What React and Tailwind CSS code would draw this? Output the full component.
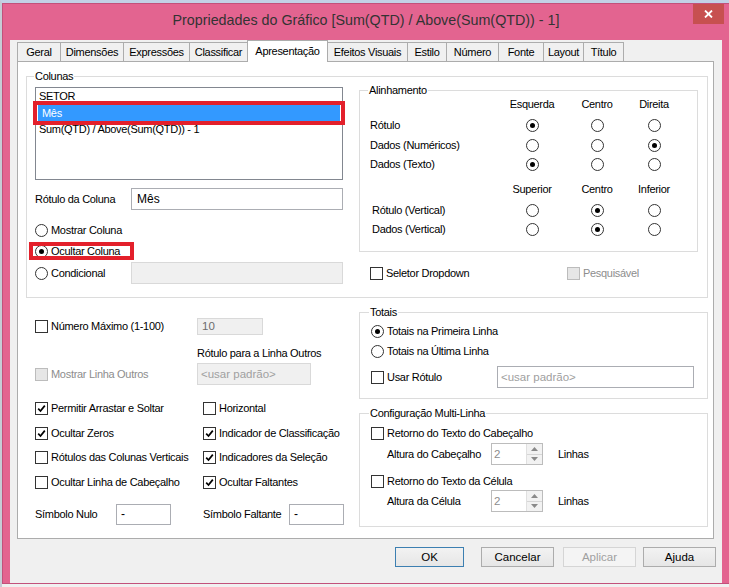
import React from 'react';

const tabs = [
  ['Geral', 'w-[43px]'],
  ['Dimensões', 'w-[63px]'],
  ['Expressões', 'w-[66px]'],
  ['Classificar', 'w-[58px]'],
  ['Apresentação', 'w-[81px]', true],
  ['Efeitos Visuais', 'w-[79px]'],
  ['Estilo', 'w-[39px]'],
  ['Número', 'w-[52px]'],
  ['Fonte', 'w-[45px]'],
  ['Layout', 'w-[40px]'],
  ['Título', 'w-[41px]'],
];

const options = [
  [['Permitir Arrastar e Soltar', true], ['Horizontal', false], 'h-[25px]'],
  [['Ocultar Zeros', true], ['Indicador de Classificação', true], 'h-[24px]'],
  [['Rótulos das Colunas Verticais', false], ['Indicadores da Seleção', true], 'h-[25px]'],
  [['Ocultar Linha de Cabeçalho', false], ['Ocultar Faltantes', true], 'h-[24px]'],
];

const Check = ({ checked, disabled }) => (
  <span className={`w-[13px] h-[13px] border shrink-0 flex items-center justify-center ${disabled ? 'border-[#bcbcbc] bg-[#e6e6e6]' : 'border-[#333] bg-white'}`}>
    {checked && (
      <svg width="9" height="9" viewBox="0 0 9 9">
        <path d="M1.2 4.6L3.5 7L7.8 1.6" fill="none" stroke="#000" strokeWidth="1.7" />
      </svg>
    )}
  </span>
);

const Radio = ({ checked }) => (
  <span className="w-[13px] h-[13px] rounded-full border border-[#333] bg-white flex items-center justify-center shrink-0">
    {checked && <span className="w-[5px] h-[5px] rounded-full bg-black" />}
  </span>
);

const CheckLabel = ({ checked, disabled, children, className = '' }) => (
  <div className={`flex items-center gap-[3px] ${disabled ? 'text-[#8d8d8d]' : ''} ${className}`}>
    <Check checked={checked} disabled={disabled} />
    <span>{children}</span>
  </div>
);

const RadioLabel = ({ checked, children, className = '' }) => (
  <div className={`flex items-center gap-[3px] ${className}`}>
    <Radio checked={checked} />
    <span>{children}</span>
  </div>
);

const Group = ({ title, className, legend, children }) => (
  <div className={`border border-[#dcdcdc] ${className}`}>
    <div className={`-mt-[7px] ${legend} w-fit h-[13px] leading-[13px] bg-white px-[1px]`}>{title}</div>
    {children}
  </div>
);

const AlignHead = ({ cols, className }) => (
  <div className={`grid grid-cols-[129px_66px_64px_50px] h-[14px] items-center ${className}`}>
    <span />
    {cols.map((c) => (
      <span key={c} className="text-center">{c}</span>
    ))}
  </div>
);

const AlignRow = ({ label, sel, h, indent, className = '' }) => (
  <div className={`grid grid-cols-[129px_66px_64px_50px] items-center ${h} ${className}`}>
    <span className={indent ? 'pl-[2px]' : ''}>{label}</span>
    {[0, 1, 2].map((i) => (
      <span key={i} className="flex justify-center">
        <Radio checked={sel === i} />
      </span>
    ))}
  </div>
);

const Spin = () => (
  <div className="w-[52px] h-[22px] flex border border-[#bcbcbc] bg-white">
    <div className="flex-1 flex items-center pl-[2px] text-[11.5px] tracking-normal text-[#8d8d8d]">2</div>
    <div className="w-[16px] flex flex-col border-l border-[#e0e0e0]">
      <div className="flex-1 bg-[#f2f2f2] border-b border-[#d6d6d6] flex items-center justify-center">
        <svg width="7" height="4" viewBox="0 0 7 4"><path d="M0 4L3.5 0L7 4Z" fill="#8a8a8a" /></svg>
      </div>
      <div className="flex-1 bg-[#f2f2f2] flex items-center justify-center">
        <svg width="7" height="4" viewBox="0 0 7 4"><path d="M0 0L3.5 4L7 0Z" fill="#8a8a8a" /></svg>
      </div>
    </div>
  </div>
);

const App = () => {
  return (
    <div className="w-[729px] h-[587px] overflow-hidden bg-[#f0f0f0] border-t-[3px] border-l-[2px] border-t-[#c3d1e6] border-l-[#c6ccd6] font-['Liberation_Sans',Arial,sans-serif] text-[11px] leading-[13px] tracking-[-0.3px] text-black">
      {/* window frame */}
      <div className="relative w-[728px] h-[581px] bg-[#e36490] border border-[#c2517b]">
        <div className="h-[28px] pt-[4px] flex items-center justify-center text-[14.3px] tracking-normal text-[#333]">
          Propriedades do Gráfico [Sum(QTD) / Above(Sum(QTD)) - 1]
        </div>
        <div className="absolute left-[690px] top-0 w-[31px] h-[20px] bg-[#c75050] flex items-center justify-center">
          <svg width="9" height="8" viewBox="0 0 9 8">
            <path d="M1 0.5L8 7.5M8 0.5L1 7.5" stroke="#fff" strokeWidth="1.8" />
          </svg>
        </div>

        {/* client area */}
        <div className="ml-[7px] w-[712px] h-[543px] bg-[#f0f0f0]">
          {/* tabs */}
          <div className="flex items-end h-[21px] mt-[8px] ml-[7px]">
            {tabs.map(([label, w, active], i) => {
              const prevActive = i > 0 && tabs[i - 1][2];
              const last = i === tabs.length - 1;
              return active ? (
                <div key={label} className={`${w} h-[22px] -mb-px relative z-10 bg-white border border-b-0 border-[#acacac] flex items-center justify-center pb-[1px]`}>
                  {label}
                </div>
              ) : (
                <div key={label} className={`${w} h-[19px] bg-[#f0f0f0] border-t border-[#acacac] ${prevActive ? '' : 'border-l'} ${last ? 'border-r' : ''} flex items-center justify-center`}>
                  {label}
                </div>
              );
            })}
          </div>

          {/* tab panel */}
          <div className="ml-[7px] w-[697px] h-[478px] bg-white border border-[#acacac] pl-[8px] pt-[14px]">
            <Group title="Colunas" legend="ml-[7px]" className="w-[682px] h-[222px]">
              <div className="flex items-start pl-[8px]">
                {/* left column */}
                <div className="w-[308px] flex flex-col">
                  <div className="relative mt-[4px] h-[93px] border border-[#828790] bg-white">
                    <div className="h-[17px] flex items-center pl-[3px]">SETOR</div>
                    <div className="h-[16px] px-[2px]">
                      <div className="h-[16px] bg-[#3399ff] text-white pl-[4px] flex items-center">Mês</div>
                    </div>
                    <div className="h-[16px] flex items-center pl-[3px]">Sum(QTD) / Above(Sum(QTD)) - 1</div>
                    <div className="absolute left-[-3px] top-[13px] w-[312px] h-[24px] border-4 border-[#e3202b]" />
                  </div>
                  <div className="mt-[8px] h-[22px] flex items-center">
                    <span className="w-[96px]">Rótulo da Coluna</span>
                    <div className="w-[212px] h-[22px] border border-[#abadb3] bg-white flex items-center pl-[5px] text-[12px] tracking-normal">Mês</div>
                  </div>
                  <RadioLabel className="mt-[10px] h-[21px]">Mostrar Coluna</RadioLabel>
                  <div className="relative h-[21px] flex items-center">
                    <RadioLabel checked>Ocultar Coluna</RadioLabel>
                    <div className="absolute left-[-6px] top-[1px] w-[105px] h-[18px] border-4 border-[#e3202b]" />
                  </div>
                  <div className="h-[22px] flex items-center">
                    <RadioLabel className="w-[96px]">Condicional</RadioLabel>
                    <div className="w-[212px] h-[22px] bg-[#f0f0f0] border border-[#d9d9d9]" />
                  </div>
                </div>

                {/* right column */}
                <div className="ml-[16px] mt-[7px] flex flex-col">
                  <Group title="Alinhamento" legend="ml-[8px]" className="w-[339px] h-[162px]">
                    <div className="pl-[10px]">
                      <AlignHead cols={['Esquerda', 'Centro', 'Direita']} />
                      <AlignRow label="Rótulo" sel={0} h="h-[20px]" className="mt-[4px]" />
                      <AlignRow label="Dados (Numéricos)" sel={2} h="h-[20px]" />
                      <AlignRow label="Dados (Texto)" sel={0} h="h-[19px]" />
                      <AlignHead cols={['Superior', 'Centro', 'Inferior']} className="mt-[8px]" />
                      <AlignRow label="Rótulo (Vertical)" sel={1} h="h-[20px]" indent className="mt-[4px]" />
                      <AlignRow label="Dados (Vertical)" sel={1} h="h-[18px]" indent />
                    </div>
                  </Group>
                  <div className="mt-[11px] h-[20px] flex items-center pl-[11px]">
                    <CheckLabel className="w-[197px]">Seletor Dropdown</CheckLabel>
                    <CheckLabel disabled>Pesquisável</CheckLabel>
                  </div>
                </div>
              </div>
            </Group>

            {/* lower section */}
            <div className="flex items-start mt-[14px] pl-[9px]">
              <div className="w-[324px] flex flex-col">
                <div className="mt-[6px] h-[17px] flex items-center">
                  <CheckLabel className="w-[162px]">Número Máximo (1-100)</CheckLabel>
                  <div className="w-[66px] h-[17px] bg-[#f0f0f0] border border-[#d9d9d9] flex items-center pl-[4px] text-[11.5px] tracking-normal text-[#6d6d6d]">10</div>
                </div>
                <div className="mt-[11px] h-[14px] ml-[162px] flex items-center">Rótulo para a Linha Outros</div>
                <div className="mt-[3px] h-[22px] flex items-center">
                  <CheckLabel disabled className="w-[162px]">Mostrar Linha Outros</CheckLabel>
                  <div className="w-[114px] h-[22px] bg-[#f0f0f0] border border-[#d9d9d9] flex items-center pl-[3px] text-[11.5px] tracking-normal text-[#a0a0a0]">&lt;usar padrão&gt;</div>
                </div>
                <div className="mt-[11px] flex flex-col">
                  {options.map(([a, b, h]) => (
                    <div key={a[0]} className={`grid grid-cols-[168px_1fr] items-center ${h}`}>
                      <CheckLabel checked={a[1]}>{a[0]}</CheckLabel>
                      <CheckLabel checked={b[1]}>{b[0]}</CheckLabel>
                    </div>
                  ))}
                </div>
                <div className="mt-[10px] h-[21px] flex items-center">
                  <span className="w-[81px]">Símbolo Nulo</span>
                  <div className="w-[55px] h-[21px] bg-white border border-[#abadb3] flex items-center pl-[4px] text-[12px]">-</div>
                  <span className="ml-[32px] w-[86px]">Símbolo Faltante</span>
                  <div className="w-[55px] h-[21px] bg-white border border-[#abadb3] flex items-center pl-[4px] text-[12px]">-</div>
                </div>
              </div>

              <div className="w-[349px] flex flex-col">
                <Group title="Totais" legend="ml-[9px]" className="w-[349px] h-[87px]">
                  <RadioLabel checked className="mt-[2px] h-[20px] pl-[11px]">Totais na Primeira Linha</RadioLabel>
                  <RadioLabel className="h-[21px] pl-[11px]">Totais na Última Linha</RadioLabel>
                  <div className="mt-[4px] h-[22px] flex items-center pl-[11px]">
                    <CheckLabel className="w-[126px]">Usar Rótulo</CheckLabel>
                    <div className="w-[197px] h-[22px] bg-white border border-[#abadb3] flex items-center pl-[3px] text-[11.5px] tracking-normal text-[#a0a0a0]">&lt;usar padrão&gt;</div>
                  </div>
                </Group>
                <Group title="Configuração Multi-Linha" legend="ml-[9px]" className="mt-[14px] w-[349px] h-[114px]">
                  <CheckLabel className="mt-[3px] h-[20px] pl-[11px]">Retorno do Texto do Cabeçalho</CheckLabel>
                  <div className="h-[22px] flex items-center pl-[27px]">
                    <span className="w-[104px]">Altura do Cabeçalho</span>
                    <Spin />
                    <span className="ml-[15px]">Linhas</span>
                  </div>
                  <CheckLabel className="mt-[7px] h-[18px] pl-[11px]">Retorno do Texto da Célula</CheckLabel>
                  <div className="h-[22px] flex items-center pl-[27px]">
                    <span className="w-[104px]">Altura da Célula</span>
                    <Spin />
                    <span className="ml-[15px]">Linhas</span>
                  </div>
                </Group>
              </div>
            </div>
          </div>

          {/* buttons */}
          <div className="mt-[8px] flex justify-end pr-[6px] text-[11.5px] tracking-normal">
            <div className="w-[69px] h-[20px] border border-[#3c7fb1] bg-gradient-to-b from-[#f2f2f2] to-[#e6e6e6] flex items-center justify-center">OK</div>
            <div className="ml-[17px] w-[73px] h-[20px] border border-[#acacac] bg-gradient-to-b from-[#f2f2f2] to-[#e6e6e6] flex items-center justify-center">Cancelar</div>
            <div className="ml-[9px] w-[73px] h-[20px] border border-[#d5d5d5] bg-[#f4f4f4] text-[#a0a0a0] flex items-center justify-center">Aplicar</div>
            <div className="ml-[7px] w-[73px] h-[20px] border border-[#acacac] bg-gradient-to-b from-[#f2f2f2] to-[#e6e6e6] flex items-center justify-center">Ajuda</div>
          </div>
        </div>
      </div>
    </div>
  );
};

export default App;
